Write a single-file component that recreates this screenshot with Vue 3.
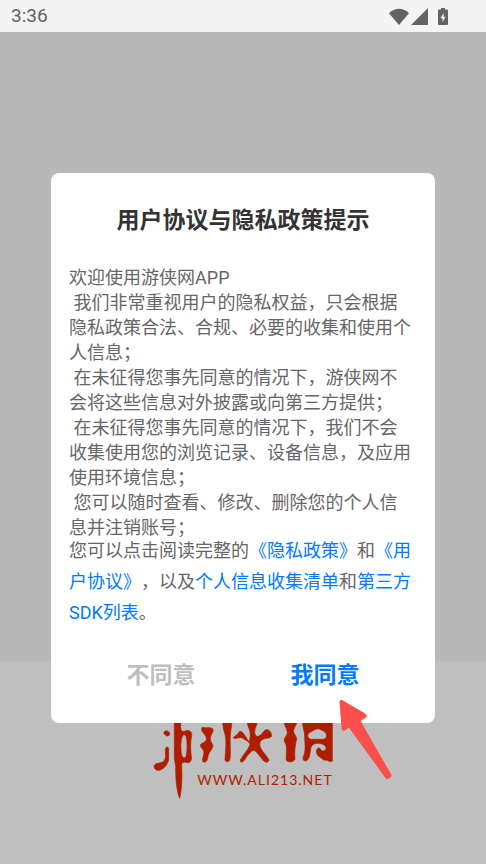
<template>
  <div class="screen">
    <header class="status-bar">
      <span class="time">3:36</span>
      <div class="status-icons">
        <svg class="wifi" viewBox="0 0 20 17" aria-hidden="true">
          <path d="M0 5.200C5.600-.9 14.400-.9 20 5.200L10 17Z" />
        </svg>
        <svg class="signal" viewBox="0 0 17 17" aria-hidden="true">
          <path d="M17 0v17H0Z" />
        </svg>
        <svg class="battery" viewBox="0 0 10 17" aria-hidden="true">
          <path fill-rule="evenodd" d="M3 0h4v1.500h2a1 1 0 0 1 1 1V16a1 1 0 0 1-1 1H1a1 1 0 0 1-1-1V2.500a1 1 0 0 1 1-1h2ZM5.600 5L2.500 10.200h2v4L7.600 8.800h-2Z" />
        </svg>
      </div>
    </header>

    <main class="splash">
      <footer class="brand">
        <svg class="logo" viewBox="0 0 630 300" role="img" aria-label="游侠网">
          <path d="M72 67C75 60 84 62 88 68C93 76 82 81 77 76C73 74 71 71 72 67Z" />
          <path d="M77 114C80 109 86 110 86 117V148C84 164 69 181 54 181C41 180 39 167 47 162C58 157 69 161 75 147C79 136 74 124 77 114Z" />
          <path fill-rule="evenodd" d="M103 30L122 30V54C124 65 129 66 138 62C149 59 157 66 155 77C151 94 151 120 154 139C156 153 150 159 140 158C131 155 124 157 125 168C127 202 125 243 119 265C110 243 107 208 107 170L103 145ZM128 78C121 84 121 134 128 141C132 146 139 143 139 134C142 119 142 96 139 83C137 73 131 72 128 78Z" />
          <path d="M188 52C200 56 210 50 218 56C222 63 216 68 213 77C207 91 215 96 219 107C216 121 207 124 204 139C203 153 197 158 190 156C184 151 190 144 191 132C194 118 184 118 181 106C184 97 199 98 200 87C198 75 190 70 186 63C184 56 184 53 188 52Z" />
          <path d="M249 30H275C276 48 273 57 271 72C269 99 274 132 269 151C264 158 256 155 255 149C257 120 260 92 255 73C252 60 247 49 249 30Z" />
          <path d="M321 30H352C353 46 344 52 344 64C344 77 351 84 360 76C370 70 371 58 382 59C393 63 393 69 395 78C391 86 380 83 371 87C360 91 356 101 362 114C369 128 381 138 387 150C385 158 378 158 371 153C359 139 352 126 342 121C331 123 321 139 313 151C306 159 300 157 301 150C309 135 325 118 330 104C328 92 315 92 309 85C300 78 286 90 280 83C287 76 294 74 299 64C308 62 318 82 327 96C331 84 331 78 330 66C327 52 321 45 321 30Z" />
          <path d="M431 30H470C474 41 464 48 461 60C458 70 470 76 470 88C465 103 463 128 465 147C461 158 442 158 439 150C438 130 443 108 435 98C428 86 440 80 442 68C441 54 432 47 431 30Z" />
          <path fill-rule="evenodd" d="M488 30H577V153C571 157 563 153 562 150C551 153 546 146 541 142C529 136 527 124 532 116C540 108 541 122 548 123C561 122 561 110 551 104C537 97 519 99 514 110C509 121 513 142 500 152C491 154 487 150 490 140C499 120 494 100 494 80C495 65 486 50 488 30ZM514 65C500 70 500 82 512 88H552C563 83 562 69 550 63C540 59 538 53 524 59Z" />
        </svg>
        <span class="site">WWW.ALI213.NET</span>
      </footer>
    </main>

    <div class="overlay">
      <section class="dialog" role="dialog" aria-modal="true" aria-labelledby="dialog-title">
        <h1 id="dialog-title">用户协议与隐私政策提示</h1>
        <div class="terms">
          <p v-for="line in terms" :key="line">{{ line }}</p>
        </div>
        <p class="links">
          您可以点击阅读完整的<a href="#privacy">《隐私政策》</a>和<a href="#agreement">《用户协议》</a>，以及<a href="#collection">个人信息收集清单</a>和<a href="#sdk">第三方SDK列表</a>。
        </p>
        <div class="actions">
          <button type="button" class="decline">不同意</button>
          <button type="button" class="accept">我同意</button>
        </div>
        <svg class="pointer" viewBox="0 0 54 82" aria-hidden="true">
          <path d="M1 3C1 1 2 1 4 2L26 15C28 17 28 18 25 19L21 22L52 76C53 78 48 81 47 79L10 28L6 31C4 32 3 31 3 28Z" />
        </svg>
      </section>
    </div>
  </div>
</template>

<script setup>
const terms = [
  '欢迎使用游侠网APP',
  ' 我们非常重视用户的隐私权益，只会根据隐私政策合法、合规、必要的收集和使用个人信息；',
  ' 在未征得您事先同意的情况下，游侠网不会将这些信息对外披露或向第三方提供；',
  ' 在未征得您事先同意的情况下，我们不会收集使用您的浏览记录、设备信息，及应用使用环境信息；',
  ' 您可以随时查看、修改、删除您的个人信息并注销账号；'
]
</script>

<style>
body {
  margin: 0;
}
</style>

<style scoped>
.screen {
  position: relative;
  display: flex;
  flex-direction: column;
  min-height: 100vh;
  background: #b8b8b8;
  font-family: Roboto, "Noto Sans CJK SC", sans-serif;
  text-spacing-trim: space-all;
}
.status-bar {
  display: flex;
  align-items: center;
  justify-content: space-between;
  box-sizing: border-box;
  height: 32px;
  padding: 0 38px 0 11px;
  background: #f4f4f4;
  color: #636363;
}
.time {
  font-size: 19px;
  line-height: 32px;
}
.status-icons {
  display: flex;
  align-items: center;
}
.status-icons svg {
  height: 17px;
  fill: #636363;
}
.wifi {
  width: 20px;
  margin-right: 2px;
}
.signal {
  width: 17px;
  margin-right: 10px;
}
.battery {
  width: 10px;
}
.splash {
  display: flex;
  flex: 1;
  flex-direction: column;
  justify-content: flex-end;
}
.brand {
  display: grid;
  justify-items: center;
  align-content: start;
  height: 154px;
  padding: 49px 0 0 4px;
  background: #bfbfbf;
}
.logo {
  grid-area: 1 / 1;
  width: 210px;
  height: 100px;
  fill: #ad1d00;
  stroke: #ad1d00;
  stroke-width: 2;
}
.site {
  grid-area: 1 / 1;
  padding: 60px 0 0 40px;
  color: #ad1d00;
  font-family: Lato, sans-serif;
  font-size: 14px;
  line-height: 20px;
  letter-spacing: 1px;
}
.overlay {
  position: absolute;
  inset: 32px 0 0;
  display: flex;
  align-items: center;
  justify-content: center;
}
.dialog {
  position: relative;
  box-sizing: border-box;
  width: 79%;
  padding: 32px 22px 30px 18px;
  border-radius: 8px;
  background: #fff;
  color: #666;
  font-size: 18px;
}
h1 {
  margin: 0 0 28px;
  padding-left: 4px;
  color: #333;
  font-size: 23px;
  font-weight: 700;
  line-height: 32px;
  text-align: center;
}
p {
  margin: 0;
}
.terms {
  line-height: 25px;
  white-space: pre-wrap;
}
.links {
  margin-top: -5px;
  line-height: 31px;
}
.links a {
  color: #007aff;
  text-decoration: none;
}
.actions {
  display: grid;
  grid-template-columns: 1fr 1fr;
  margin-top: 31px;
  padding: 0 6px 0 10px;
}
button {
  padding: 0;
  border: 0;
  background: none;
  font-family: inherit;
  font-size: 23px;
  font-weight: 700;
  line-height: 34px;
  cursor: pointer;
}
.decline {
  color: #bfbfbf;
}
.accept {
  color: #007aff;
}
.pointer {
  position: absolute;
  right: 42px;
  bottom: -58px;
  width: 54px;
  height: 82px;
  fill: #fa4f4b;
  stroke: #fa4f4b;
  stroke-width: 1;
}
</style>
